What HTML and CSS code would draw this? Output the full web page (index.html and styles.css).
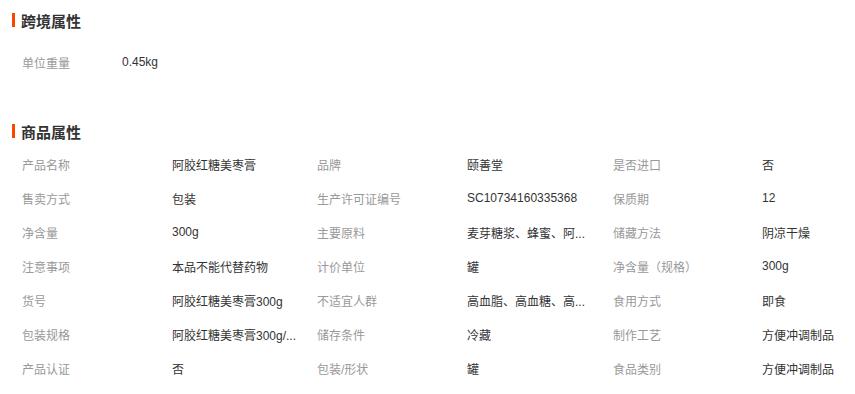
FILE: index.html
```html
<!DOCTYPE html>
<html lang="zh-CN">
<head>
<meta charset="utf-8">
<title>商品属性</title>
<link rel="stylesheet" href="styles.css">
</head>
<body>
<div class="page">
  <section class="section section-first">
    <h2 class="section-title"><span class="bar"></span>跨境属性</h2>
    <div class="simple-list">
      <div class="row-simple">
        <span class="label label-short">单位重量</span>
        <span class="value">0.45kg</span>
      </div>
    </div>
  </section>

  <section class="section section-second">
    <h2 class="section-title"><span class="bar"></span>商品属性</h2>
    <div class="attr-grid">
      <span class="label">产品名称</span><span class="value">阿胶红糖美枣膏</span>
      <span class="label">品牌</span><span class="value">颐善堂</span>
      <span class="label">是否进口</span><span class="value">否</span>

      <span class="label">售卖方式</span><span class="value">包装</span>
      <span class="label">生产许可证编号</span><span class="value">SC10734160335368</span>
      <span class="label">保质期</span><span class="value">12</span>

      <span class="label">净含量</span><span class="value">300g</span>
      <span class="label">主要原料</span><span class="value">麦芽糖浆、蜂蜜、阿...</span>
      <span class="label">储藏方法</span><span class="value">阴凉干燥</span>

      <span class="label">注意事项</span><span class="value">本品不能代替药物</span>
      <span class="label">计价单位</span><span class="value">罐</span>
      <span class="label">净含量（规格）</span><span class="value">300g</span>

      <span class="label">货号</span><span class="value">阿胶红糖美枣膏300g</span>
      <span class="label">不适宜人群</span><span class="value">高血脂、高血糖、高...</span>
      <span class="label">食用方式</span><span class="value">即食</span>

      <span class="label">包装规格</span><span class="value">阿胶红糖美枣膏300g/...</span>
      <span class="label">储存条件</span><span class="value">冷藏</span>
      <span class="label">制作工艺</span><span class="value">方便冲调制品</span>

      <span class="label">产品认证</span><span class="value">否</span>
      <span class="label">包装/形状</span><span class="value">罐</span>
      <span class="label">食品类别</span><span class="value">方便冲调制品</span>
    </div>
  </section>
</div>
</body>
</html>
```

FILE: styles.css
```css
html, body {
  margin: 0;
  padding: 0;
  background: #fff;
}

body {
  font-family: "Liberation Sans", "Noto Sans CJK SC", sans-serif;
  font-size: 12px;
  color: #333;
}

.page {
  padding-left: 12px;
}

.section-first {
  padding-top: 4px;
}

.section-second {
  margin-top: 36px;
}

.section-title {
  display: flex;
  align-items: center;
  gap: 6px;
  height: 32px;
  margin: 0;
  font-size: 15px;
  font-weight: bold;
  color: #333;
}

.bar {
  display: block;
  width: 3px;
  height: 14px;
  background: #ff4400;
}

.simple-list {
  margin-top: 9px;
  padding-left: 10px;
}

.row-simple {
  display: flex;
  align-items: center;
  height: 34px;
}

.label {
  color: #999;
  white-space: nowrap;
}

.label-short {
  width: 100px;
}

.value {
  color: #333;
  white-space: nowrap;
}

.attr-grid {
  display: grid;
  grid-template-columns: 150px 145px 150px 146px 149px 1fr;
  grid-auto-rows: 34px;
  align-items: center;
  padding-left: 10px;
}
```
